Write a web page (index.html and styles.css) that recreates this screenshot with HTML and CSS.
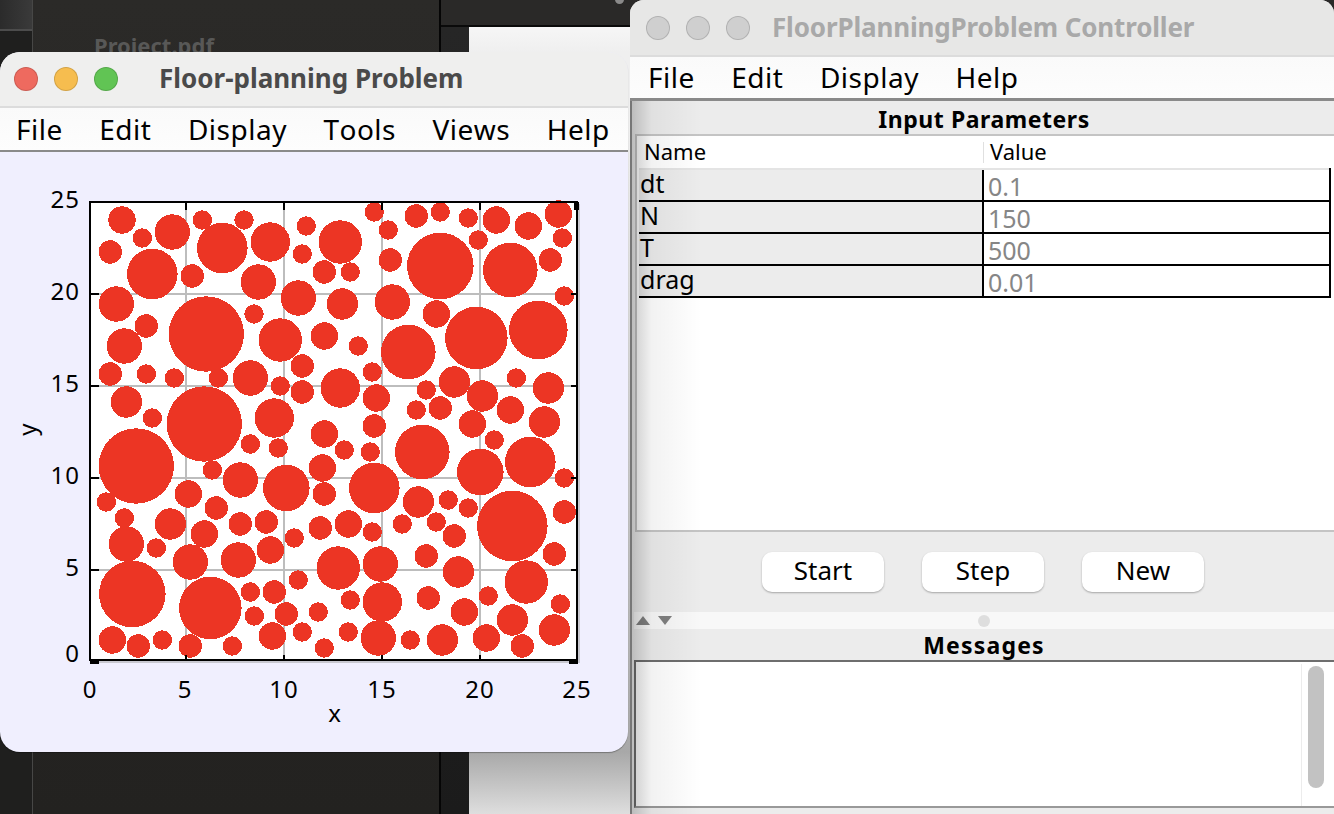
FILE: index.html
```html
<!DOCTYPE html>
<html lang="en">
<head>
  <meta charset="UTF-8" />
  <title>FloorPlanningProblem</title>
  <link rel="stylesheet" href="styles.css">
</head>
<body>
  <!-- desktop behind the two windows -->
  <div class="desktop">
    <div class="back-side"><div class="back-side-top"></div></div>
    <div class="back-main"><span class="back-file">Project.pdf</span></div>
    <div class="back-right">
      <div class="back-strip"><span class="strip-dot"></span></div>
      <div class="back-lower">
        <div class="back-gutter"></div>
        <div class="back-doc"></div>
      </div>
    </div>
  </div>

  <!-- plot window -->
  <section class="window plot-window">
    <header class="titlebar">
      <span class="light red"></span>
      <span class="light yellow"></span>
      <span class="light green"></span>
      <h1 class="title">Floor-planning Problem</h1>
    </header>
    <nav class="menu plot-menu">
      <span>File</span><span>Edit</span><span>Display</span><span>Tools</span><span>Views</span><span>Help</span>
    </nav>
    <div class="plot-body">
      <svg class="plot" width="628" height="600" viewBox="0 152 628 600">
        <rect class="plot-shadow" x="92" y="204" width="488" height="459"/>
        <rect class="plot-bg" x="90" y="202" width="487" height="458"/>
        <g class="grid">
          <path d="M186 202V660M284 202V660M382 202V660M480 202V660M90 294H577M90 386H577M90 478H577M90 570H577"/>
        </g>
        <g class="discs">
          <circle cx="122" cy="220" r="13.7"/><circle cx="142.3" cy="238" r="9.7"/><circle cx="172.3" cy="232" r="17.7"/>
          <circle cx="202.3" cy="220" r="9.7"/><circle cx="244" cy="220" r="9.7"/><circle cx="222.3" cy="248" r="25.3"/>
          <circle cx="270.3" cy="242" r="19.7"/><circle cx="306.3" cy="226" r="9.7"/><circle cx="110.3" cy="252" r="11.7"/>
          <circle cx="152.3" cy="274" r="25.3"/><circle cx="192.3" cy="276" r="11.7"/><circle cx="258.3" cy="282" r="17.7"/>
          <circle cx="302.3" cy="254" r="9.7"/><circle cx="324.3" cy="272" r="11.7"/><circle cx="116.3" cy="304" r="17.7"/>
          <circle cx="298.3" cy="298" r="17.7"/><circle cx="254" cy="314" r="9.7"/><circle cx="146.3" cy="326" r="11.7"/>
          <circle cx="206.3" cy="334" r="37.7"/><circle cx="280.3" cy="340" r="21.7"/><circle cx="324.3" cy="336" r="13.7"/>
          <circle cx="124.3" cy="346" r="17.7"/><circle cx="302.3" cy="366" r="11.7"/><circle cx="110.3" cy="374" r="11.7"/>
          <circle cx="146.3" cy="374" r="9.7"/><circle cx="174.3" cy="378" r="9.7"/><circle cx="218.3" cy="378" r="9.7"/>
          <circle cx="250.3" cy="378" r="17.7"/><circle cx="280.3" cy="386" r="9.7"/><circle cx="302.3" cy="392" r="11.7"/>
          <circle cx="126.3" cy="402" r="15.7"/><circle cx="152.3" cy="418" r="9.7"/><circle cx="204.3" cy="424" r="37.7"/>
          <circle cx="274.3" cy="418" r="19.7"/><circle cx="374.3" cy="212" r="9.7"/><circle cx="388.3" cy="230" r="9.7"/>
          <circle cx="416.3" cy="216" r="11.7"/><circle cx="440.3" cy="212" r="9.7"/><circle cx="468.3" cy="218" r="9.7"/>
          <circle cx="496.3" cy="220" r="13.7"/><circle cx="528.3" cy="226" r="13.7"/><circle cx="558.3" cy="214" r="13.7"/>
          <circle cx="562.3" cy="238" r="9.7"/><circle cx="340.3" cy="242" r="21.7"/><circle cx="478.3" cy="240" r="9.7"/>
          <circle cx="390.3" cy="260" r="11.7"/><circle cx="440.3" cy="266" r="33.3"/><circle cx="510.3" cy="270" r="27.3"/>
          <circle cx="550.3" cy="260" r="11.7"/><circle cx="350.3" cy="272" r="9.7"/><circle cx="342.3" cy="304" r="15.7"/>
          <circle cx="392.3" cy="302" r="17.7"/><circle cx="564.3" cy="296" r="9.7"/><circle cx="436.3" cy="314" r="13.7"/>
          <circle cx="476.3" cy="338" r="31.3"/><circle cx="538.3" cy="330" r="29.3"/><circle cx="408.3" cy="352" r="27.3"/>
          <circle cx="358.3" cy="346" r="9.7"/><circle cx="340.3" cy="388" r="19.7"/><circle cx="372.3" cy="372" r="9.7"/>
          <circle cx="376.3" cy="398" r="13.7"/><circle cx="426.3" cy="390" r="9.7"/><circle cx="454.3" cy="382" r="15.7"/>
          <circle cx="482.3" cy="396" r="15.7"/><circle cx="516.3" cy="378" r="9.7"/><circle cx="548.3" cy="388" r="15.7"/>
          <circle cx="510.3" cy="410" r="13.7"/><circle cx="416.3" cy="410" r="9.7"/><circle cx="440.3" cy="408" r="11.7"/>
          <circle cx="472.3" cy="424" r="13.7"/><circle cx="544.3" cy="422" r="15.7"/><circle cx="374.3" cy="426" r="11.7"/>
          <circle cx="344.3" cy="450" r="9.7"/><circle cx="370.3" cy="452" r="9.7"/><circle cx="422.3" cy="452" r="27.3"/>
          <circle cx="494.3" cy="440" r="9.7"/><circle cx="530.3" cy="462" r="25.3"/><circle cx="480.3" cy="472" r="23.3"/>
          <circle cx="374.3" cy="488" r="25.3"/><circle cx="564.3" cy="478" r="9.7"/><circle cx="322.3" cy="468" r="13.7"/>
          <circle cx="418.3" cy="502" r="15.7"/><circle cx="448.3" cy="500" r="9.7"/><circle cx="468.3" cy="508" r="9.7"/>
          <circle cx="512.3" cy="526" r="35.3"/><circle cx="564.3" cy="512" r="11.7"/><circle cx="324.3" cy="494" r="11.7"/>
          <circle cx="348.3" cy="524" r="13.7"/><circle cx="372.3" cy="532" r="9.7"/><circle cx="402.3" cy="524" r="9.7"/>
          <circle cx="436.3" cy="522" r="9.7"/><circle cx="454.3" cy="536" r="11.7"/><circle cx="554.3" cy="554" r="11.7"/>
          <circle cx="426.3" cy="556" r="11.7"/><circle cx="380.3" cy="564" r="17.7"/><circle cx="338.3" cy="568" r="21.7"/>
          <circle cx="458.3" cy="572" r="15.7"/><circle cx="526.3" cy="582" r="21.7"/><circle cx="350.3" cy="600" r="9.7"/>
          <circle cx="382.3" cy="602" r="19.7"/><circle cx="428.3" cy="598" r="11.7"/><circle cx="464.3" cy="612" r="13.7"/>
          <circle cx="488.3" cy="596" r="9.7"/><circle cx="560.3" cy="604" r="9.7"/><circle cx="512.3" cy="620" r="15.7"/>
          <circle cx="554.3" cy="630" r="15.7"/><circle cx="348.3" cy="632" r="9.7"/><circle cx="378.3" cy="638" r="17.7"/>
          <circle cx="410.3" cy="640" r="9.7"/><circle cx="442.3" cy="640" r="15.7"/><circle cx="486.3" cy="638" r="13.7"/>
          <circle cx="522.3" cy="646" r="11.7"/><circle cx="324.3" cy="648" r="9.7"/><circle cx="136.3" cy="466" r="37.7"/>
          <circle cx="250.3" cy="444" r="9.7"/><circle cx="278.3" cy="448" r="9.7"/><circle cx="324.3" cy="434" r="13.7"/>
          <circle cx="212.3" cy="470" r="9.7"/><circle cx="240.3" cy="480" r="17.7"/><circle cx="286.3" cy="488" r="23.3"/>
          <circle cx="106.3" cy="502" r="9.7"/><circle cx="188.3" cy="494" r="13.7"/><circle cx="216.3" cy="508" r="11.7"/>
          <circle cx="124.3" cy="518" r="9.7"/><circle cx="170.3" cy="524" r="15.7"/><circle cx="204.3" cy="534" r="13.7"/>
          <circle cx="240.3" cy="524" r="11.7"/><circle cx="266.3" cy="522" r="11.7"/><circle cx="294.3" cy="538" r="9.7"/>
          <circle cx="320.3" cy="528" r="11.7"/><circle cx="126.3" cy="544" r="17.7"/><circle cx="156.3" cy="548" r="9.7"/>
          <circle cx="190.3" cy="562" r="17.7"/><circle cx="238.3" cy="560" r="17.7"/><circle cx="270.3" cy="550" r="13.7"/>
          <circle cx="298.3" cy="580" r="9.7"/><circle cx="132.3" cy="594" r="33.3"/><circle cx="210.3" cy="608" r="31.3"/>
          <circle cx="250.3" cy="592" r="9.7"/><circle cx="274.3" cy="592" r="11.7"/><circle cx="254.3" cy="616" r="9.7"/>
          <circle cx="286.3" cy="614" r="11.7"/><circle cx="318.3" cy="612" r="9.7"/><circle cx="272.3" cy="636" r="13.7"/>
          <circle cx="302.3" cy="632" r="9.7"/><circle cx="112.3" cy="640" r="13.7"/><circle cx="138.3" cy="646" r="11.7"/>
          <circle cx="162.3" cy="640" r="9.7"/><circle cx="190.3" cy="646" r="11.7"/><circle cx="232.3" cy="646" r="9.7"/>
        </g>
        <path class="ticks" d="M186 202V210M284 202V210M382 202V210M480 202V210M186 660V655M284 660V655M382 660V655M480 660V655M90 294H99M90 386H99M90 478H99M90 570H99M577 294H571M577 386H571M577 478H571M577 570H571"/>
        <rect class="frame" x="90" y="202" width="487" height="458"/>
        <path class="corners" d="M90 661H99M569 661H578M576.500 202V210"/>
        <g class="y-labels">
          <text x="80" y="208">25</text><text x="80" y="300">20</text><text x="80" y="392">15</text>
          <text x="80" y="484">10</text><text x="80" y="576">5</text><text x="80" y="662">0</text>
        </g>
        <g class="x-labels">
          <text x="90" y="698">0</text><text x="185" y="698">5</text><text x="284" y="698">10</text>
          <text x="382" y="698">15</text><text x="480" y="698">20</text><text x="577" y="698">25</text>
        </g>
        <text class="axis-name" x="335" y="722">x</text>
        <text class="axis-name" transform="translate(36 429) rotate(-90)">y</text>
      </svg>
    </div>
  </section>

  <!-- controller window -->
  <section class="window control-window">
    <header class="titlebar idle">
      <span class="light"></span>
      <span class="light"></span>
      <span class="light"></span>
      <h1 class="title">FloorPlanningProblem Controller</h1>
    </header>
    <nav class="menu control-menu">
      <span>File</span><span>Edit</span><span>Display</span><span>Help</span>
    </nav>
    <div class="control-body">
      <h2 class="panel-title">Input Parameters</h2>
      <div class="param-box">
        <table class="params">
          <thead>
            <tr><th>Name</th><th>Value</th></tr>
          </thead>
          <tbody>
            <tr><td>dt</td><td>0.1</td></tr>
            <tr><td>N</td><td>150</td></tr>
            <tr><td>T</td><td>500</td></tr>
            <tr><td>drag</td><td>0.01</td></tr>
          </tbody>
        </table>
      </div>
      <div class="buttons">
        <button type="button">Start</button>
        <button type="button">Step</button>
        <button type="button">New</button>
      </div>
      <div class="splitter">
        <span class="arrow up"></span>
        <span class="arrow down"></span>
        <span class="grip"></span>
      </div>
      <h2 class="panel-title messages-title">Messages</h2>
      <div class="messages">
        <div class="scroll-track"><div class="scroll-thumb"></div></div>
      </div>
      <div class="edge-shade"></div>
    </div>
  </section>
</body>
</html>
```

FILE: styles.css
```css
* {
  box-sizing: border-box;
}

html, body {
  margin: 0;
  height: 100%;
}

body {
  position: relative;
  width: 1334px;
  height: 814px;
  overflow: hidden;
  background: #1e1d1c;
  font-family: "Noto Sans", sans-serif;
  color: #000;
}

/* desktop */
.desktop {
  display: flex;
  height: 100%;
}

.back-side {
  flex: none;
  width: 33px;
  background: #1f1f1e;
  border-right: 1px solid #474746;
}

.back-side-top {
  height: 31px;
  background: linear-gradient(90deg, #2b2b2b, #3a3a3a);
  border-bottom: 2px solid #4c4c4c;
}

.back-main {
  flex: none;
  width: 406px;
  padding: 30px 0 0 61px;
  background: linear-gradient(#2b2a28, #232220);
}

.back-file {
  font-size: 22px;
  font-weight: 700;
  color: #585857;
}

.back-right {
  flex: 1;
  border-left: 2px solid #050505;
}

.back-strip {
  position: relative;
  height: 27px;
  background: #2a2928;
  border-bottom: 2px solid #0a0a0a;
}

.strip-dot {
  position: absolute;
  left: 174px;
  top: -5px;
  width: 9px;
  height: 9px;
  border-radius: 50%;
  background: #8a8a8a;
}

.back-lower {
  display: flex;
  height: 787px;
}

.back-gutter {
  width: 28px;
  background: linear-gradient(#262626, #1b1b1b);
}

.back-doc {
  flex: 1;
  background: linear-gradient(#f6f6f6 0, #efefef 25px, #efefef 100px, #a8a8a8 725px, #dedede 787px);
}

/* windows */
.window {
  position: absolute;
  display: flex;
  flex-direction: column;
  overflow: hidden;
}

.plot-window {
  left: 0;
  top: 52px;
  width: 628px;
  height: 700px;
  border-radius: 20px;
  background: #f0effe;
  box-shadow: 0 1px 1px rgba(0, 0, 0, 0.3);
  z-index: 2;
}

.control-window {
  left: 630px;
  top: 0;
  width: 704px;
  height: 814px;
  border-radius: 14px 14px 0 0;
  background: #ececec;
}

.titlebar {
  position: relative;
  display: flex;
  align-items: center;
  gap: 16px;
  flex: none;
  height: 56px;
  padding-left: 14px;
  background: #efefee;
  border-bottom: 2px solid #dcdcdc;
}

.light {
  width: 24px;
  height: 24px;
  border-radius: 50%;
  border: 1px solid rgba(0, 0, 0, 0.14);
  background: #cfcfcf;
}

.red { background: #ee6a5f; }
.yellow { background: #f6bd4f; }
.green { background: #61c454; }

.title {
  position: absolute;
  left: 159px;
  top: 7px;
  margin: 0;
  font-size: 26px;
  line-height: 38px;
  font-weight: 700;
  color: #4a4a4a;
  white-space: nowrap;
}

.titlebar.idle {
  height: 57px;
  padding-left: 16px;
  background: #e7e7e6;
}

.idle .title {
  left: 142px;
  top: 8px;
  letter-spacing: -0.150px;
  color: #a9a9a9;
}

.menu {
  display: flex;
  flex: none;
  height: 44px;
  gap: 36.500px;
  align-items: center;
  padding-left: 16px;
  font-size: 28px;
  letter-spacing: 0.500px;
  font-kerning: none;
  background: linear-gradient(#fafafa, #fdfdfd);
  border-bottom: 2px solid #8a8a8a;
}

.control-menu {
  padding: 0 0 2px 18px;
  border-bottom-width: 3px;
}

.plot-body {
  flex: 1;
}

/* plot */
.plot {
  display: block;
}

.plot-shadow {
  fill: #c8c8d0;
}

.plot-bg {
  fill: #fff;
}

.grid path {
  fill: none;
  stroke: #bdbdbd;
  stroke-width: 2;
  shape-rendering: crispEdges;
}

.discs circle {
  fill: #ec3524;
  shape-rendering: crispEdges;
}

.ticks, .corners, .frame {
  fill: none;
  stroke: #000;
  shape-rendering: crispEdges;
}

.ticks, .frame {
  stroke-width: 2.500;
}

.corners {
  stroke-width: 5;
}

.y-labels text, .x-labels text, .axis-name {
  font-size: 24px;
  letter-spacing: 1px;
  fill: #000;
}

.y-labels text {
  text-anchor: end;
}

.x-labels text, .axis-name {
  text-anchor: middle;
}

/* controller */
.control-body {
  position: relative;
  flex: 1;
  display: flex;
  flex-direction: column;
  border-left: 2px solid #777;
  background: #ececec;
}

.panel-title {
  flex: none;
  margin: 0;
  padding-left: 2px;
  height: 33px;
  line-height: 36px;
  text-align: center;
  font-size: 23px;
  font-weight: 700;
  letter-spacing: 0.550px;
}

.param-box {
  flex: none;
  height: 398px;
  margin-left: 3px;
  padding: 0 3px 0 2px;
  background: #fff;
  border: 2px solid #c4c4c4;
  border-right: none;
}

.params {
  width: 692px;
  border-collapse: collapse;
  table-layout: fixed;
}

.params th {
  height: 33px;
  padding: 0 0 2px 5px;
  font-size: 22px;
  font-weight: 400;
  text-align: left;
  background: #fff;
}

.params th + th {
  padding-left: 7px;
  background: linear-gradient(#e0e0e0, #e0e0e0) left 6px / 1px 21px no-repeat #fff;
}

.params th:first-child {
  width: 344px;
}

.params td {
  height: 32px;
  padding: 0 0 0 1px;
  font-size: 25px;
  line-height: 26px;
  vertical-align: top;
  border-bottom: 2px solid #000;
  background: #ececec;
}

.params td + td {
  padding-left: 4px;
  padding-top: 3px;
  color: #868686;
  background: #fff;
  border-left: 2px solid #000;
  border-right: 2px solid #000;
}

.params tbody tr:first-child td {
  border-top: 2px solid #e4e4e4;
}

.buttons {
  flex: none;
  display: flex;
  justify-content: center;
  gap: 38px;
  height: 80px;
  padding-top: 20px;
}

button {
  width: 122px;
  height: 40px;
  padding: 0 0 4px;
  font-family: inherit;
  font-size: 26px;
  color: #000;
  background: #fff;
  border: none;
  border-radius: 10px;
  box-shadow: 0 1px 2px rgba(0, 0, 0, 0.3);
}

.splitter {
  position: relative;
  flex: none;
  height: 17px;
  margin-left: 2px;
  background: #f8f8f8;
}

.arrow {
  position: absolute;
  top: 4px;
  width: 0;
  height: 0;
  border-left: 7px solid transparent;
  border-right: 7px solid transparent;
}

.arrow.up {
  left: 2px;
  border-bottom: 9px solid #808080;
}

.arrow.down {
  left: 24px;
  border-top: 9px solid #808080;
}

.grip {
  position: absolute;
  left: 344px;
  top: 3px;
  width: 12px;
  height: 12px;
  border-radius: 50%;
  background: #dedede;
}

.messages-title {
  height: 31px;
  line-height: 33px;
  letter-spacing: 1.200px;
}

.messages {
  position: relative;
  flex: none;
  height: 148px;
  margin-left: 2px;
  background: #fff;
  border: 2px solid #6e6e6e;
  border-bottom-color: #999;
  border-right: none;
}

.scroll-track {
  position: absolute;
  right: 0;
  top: 2px;
  bottom: 0;
  width: 33px;
  padding: 2px 10px 0 6px;
  border-left: 1px solid #ececec;
}

.scroll-thumb {
  height: 122px;
  border-radius: 8px;
  background: #c2c2c2;
}

/* shadow cast by the plot window */
.edge-shade {
  position: absolute;
  left: 0;
  top: 0;
  width: 70px;
  height: 100%;
  background: linear-gradient(90deg, rgba(0, 0, 0, 0.2), rgba(0, 0, 0, 0.05) 28%, transparent);
  pointer-events: none;
}
```
